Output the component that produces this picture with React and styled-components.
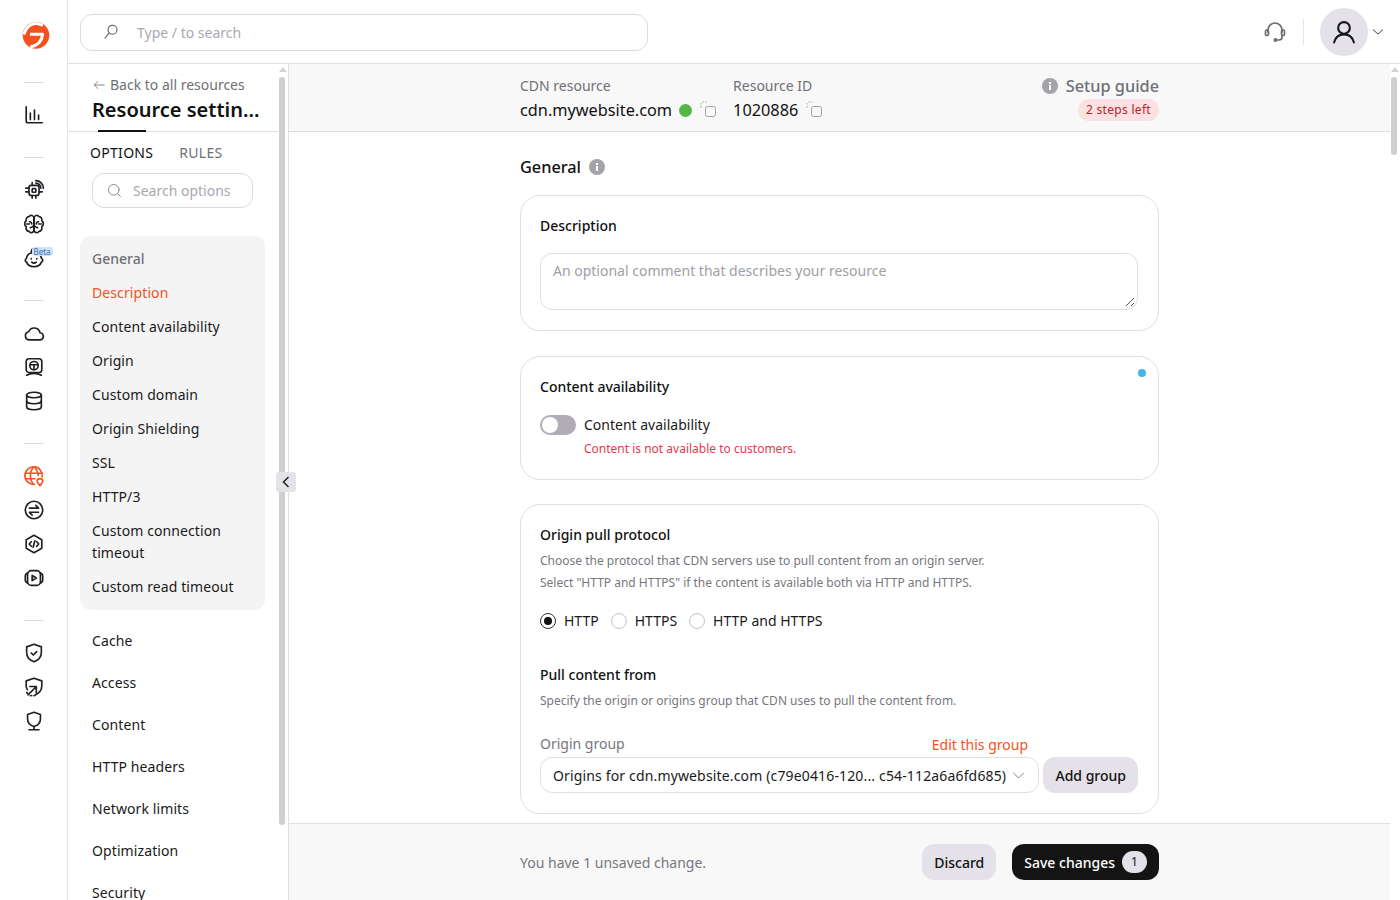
import React from 'react';
import styled, { createGlobalStyle } from 'styled-components';

const GlobalStyle = createGlobalStyle`
    html, body, #root {
        margin: 0;
        height: 100%;
    }
    body {
        font-family: "Noto Sans", "Open Sans", sans-serif;
        color: #1a1a1a;
        background: #fff;
        overflow: hidden;
    }
    * {
        box-sizing: border-box;
    }
`;

const Line = ({ size = 22, color = 'currentColor', width = 1.6, children }) => (
    <svg width={size} height={size} viewBox="0 0 24 24" fill="none" stroke={color} strokeWidth={width} strokeLinecap="round" strokeLinejoin="round">
        {children}
    </svg>
);

const Logo = () => (
    <svg width="30" height="30" viewBox="20 12 90 90" fill="none">
        <circle cx="65" cy="58" r="40" fill="#f4511e" />
        <path d="M82 27C60 15 38 27 30 52" stroke="#fff" strokeWidth="9" strokeLinecap="round" />
        <path d="M47 55H85C83 74 71 88 48 93" stroke="#fff" strokeWidth="9" strokeLinejoin="round" />
    </svg>
);

const railGroups = [
    [
        <><path d="M3.500 3v15.500a2 2 0 0 0 2 2H21" /><path d="M8 10v7M12.500 6.500v10.500M17 12v5" /></>,
    ],
    [
        <><rect x="6.500" y="7" width="11" height="11" rx="2.500" /><rect x="10" y="10.500" width="4" height="4" rx="1" /><path d="M3 10h3.500M3 14h3.500M17.500 14h3.500M10 18v3M14 18v3M10 4v3M14 4.500c3 0 5.500 2.500 5.500 5.500M14 1.800c4.500 0 8.200 3.700 8.200 8.200" /></>,
        <><path d="M12 5.500a3 3 0 0 0-5.500-1.500A3.500 3.500 0 0 0 3.500 8.500a4 4 0 0 0 0 6.500 3.700 3.700 0 0 0 3 5 3 3 0 0 0 5.500-1z" /><path d="M12 5.500a3 3 0 0 1 5.500-1.500 3.500 3.500 0 0 1 3 4.500 4 4 0 0 1 0 6.500 3.700 3.700 0 0 1-3 5 3 3 0 0 1-5.500-1z" /><path d="M12 5.500v13.500M7 9.500c1.500 0 2.500 1 2.500 2.500M17 9.500c-1.500 0-2.500 1-2.500 2.500M4 12h3M20 12h-3M8 16c1 0 2-.5 2.500-1.500M16 16c-1 0-2-.5-2.500-1.500" /></>,
        <><path d="M11 2c-2 1-2.500 3-1 4.300C6 7 4 9.500 3.800 12.500 2 13 2 16 3.900 16.500 5 19.500 8 21.500 12 21.500s7-2 8.100-5C22 16 22 13 20.200 12.500 19.800 9 16.500 6 12 6" /><path d="M9 12.500v.5M15 12.500v.5M9.500 16.500c1.500 1.300 3.500 1.300 5 0" /></>,
    ],
    [
        <path d="M7 19.500a4.500 4.500 0 0 1-.8-8.900 6.500 6.500 0 0 1 12.400 1.100 3.900 3.900 0 0 1-.6 7.800z" />,
        <><rect x="3.500" y="3" width="17" height="15" rx="3" /><circle cx="12" cy="10.500" r="4.500" /><path d="M7.800 9.500h8.400M12 10v5" /><path d="M4 21c2.500-1.500 5-2 8-2s5.500.5 8 2" /></>,
        <><ellipse cx="12" cy="5.500" rx="8" ry="3" /><path d="M4 5.500v13c0 1.700 3.600 3 8 3s8-1.300 8-3v-13" /><path d="M4 12c0 1.700 3.600 3 8 3s8-1.300 8-3" /></>,
    ],
    [
        <><g stroke="#f4511e"><path d="M21 13A9.500 9.500 0 1 0 12.500 21" /><path d="M2.800 9h18M3 15h10M11 2.800C7 8 7 15.500 11 21M13 2.800c2.600 3.200 3.700 6.500 3.700 8.700" /><path d="M18.500 22.500c-1.500-1.700-3-3-3-4.700a3 3 0 0 1 6 0c0 1.700-1.500 3-3 4.700z" /></g></>,
        <><circle cx="12" cy="12" r="9.500" /><path d="M7 10h10l-3-3M17 14.500H7l3 3" /></>,
        <><path d="M12 2.500l8.500 4.800v9.400L12 21.500l-8.500-4.800V7.300z" /><path d="M9 9.500L6.800 12 9 14.500M15 9.500l2.200 2.500-2.200 2.500M13 8.500l-2 7" /></>,
        <><rect x="5" y="4" width="14" height="16" rx="4" /><path d="M5 6.500c-1.500.5-2.500 2-2.500 3.500v4c0 1.500 1 3 2.500 3.500M19 6.500c1.500.5 2.500 2 2.500 3.500v4c0 1.500-1 3-2.500 3.500" /><path d="M10 9.200l4.500 2.800-4.500 2.800z" /></>,
    ],
    [
        <><path d="M12 2.500l8 2.800v6.200c0 5-3.500 8.500-8 10-4.500-1.500-8-5-8-10V5.300z" /><path d="M9 12l2.200 2.200L15 10.500" /></>,
        <><path d="M4.800 15C4 14 3.500 12.800 3.500 11V5.300L12 2.500l8.500 2.800V11c0 5-3.500 8.500-8.500 10.500" /><path d="M5.500 20.500l8.500-8.500M7.500 11.500H14.500V18.500" /><path d="M4 18l1 1M8 21.500l1.500-.2" /></>,
        <><path d="M12 2.500l7 2.500v5c0 4-3 6.800-7 8-4-1.200-7-4-7-8V5z" /><path d="M12 18v3.500M6.500 21.500h11" /></>,
    ],
];

const navGeneral = ['Description', 'Content availability', 'Origin', 'Custom domain', 'Origin Shielding', 'SSL', 'HTTP/3', 'Custom connection timeout', 'Custom read timeout'];
const navOther = ['Cache', 'Access', 'Content', 'HTTP headers', 'Network limits', 'Optimization', 'Security'];

const CopyIcon = () => (
    <CopyWrap>
        <svg width="16" height="16" viewBox="0 0 16 16" fill="none" strokeWidth="1">
            <path d="M1 6.500V2.500a1.500 1.500 0 0 1 1.500-1.500H6.500" stroke="#a0a0a6" strokeDasharray="1.500 1.500" />
            <rect x="5.500" y="5.500" width="10" height="10" rx="2" stroke="#a0a0a6" />
        </svg>
    </CopyWrap>
);

const InfoIcon = ({ size = 16 }) => (
    <svg width={size} height={size} viewBox="0 0 16 16">
        <circle cx="8" cy="8" r="8" fill="#a3a3a8" />
        <rect x="7" y="7" width="2" height="5" fill="#fff" />
        <rect x="7" y="4" width="2" height="2" fill="#fff" />
    </svg>
);

const App = () => {
    return (
        <Page>
            <GlobalStyle />
            <Rail>
                <LogoSlot><Logo /></LogoSlot>
                {railGroups.map((group, i) => (
                    <RailGroup key={i}>
                        <RailDivider />
                        {group.map((icon, j) => (
                            <RailIcon key={j}>
                                <Line size={22} width={1.8}>{icon}</Line>
                                {i === 1 && j === 2 && <BetaTag>Beta</BetaTag>}
                            </RailIcon>
                        ))}
                    </RailGroup>
                ))}
            </Rail>

            <Workspace>
                <TopBar>
                    <GlobalSearch>
                        <Line size={18} color="#55555c" width={1.4}>
                            <circle cx="14" cy="9" r="6" />
                            <path d="M9.500 13.500L4 20" />
                        </Line>
                        <span>Type / to search</span>
                    </GlobalSearch>
                    <TopActions>
                        <Line size={24} color="#6c6c73" width={1.7}>
                            <path d="M5 12V10a7 7 0 0 1 14 0v2M19 15v2a3 3 0 0 1-3 3h-2" />
                            <rect x="2.500" y="10" width="3" height="5.500" rx="1.200" />
                            <rect x="18.500" y="10" width="3" height="5.500" rx="1.200" />
                            <circle cx="12.500" cy="20" r="1.200" />
                        </Line>
                        <TopSeparator />
                        <Avatar>
                            <Line size={28} color="#16161a" width={1.8}>
                                <circle cx="12" cy="8.500" r="5" />
                                <path d="M3.500 21c1-4 4-7 8.500-7s7.500 3 8.500 7" />
                            </Line>
                        </Avatar>
                        <Line size={16} color="#33333a" width={1.4}><path d="M5 9l7 6 7-6" /></Line>
                    </TopActions>
                </TopBar>

                <Body>
                    <Sidebar>
                        <SidebarColumn>
                            <SidebarHead>
                                <BackLink>
                                    <Line size={14} color="#77777e" width={1.5}><path d="M21 12H4M10 6l-6 6 6 6" /></Line>
                                    Back to all resources
                                </BackLink>
                                <SidebarTitle>Resource settin...</SidebarTitle>
                            </SidebarHead>
                            <Tabs>
                                <Tab $active>OPTIONS</Tab>
                                <Tab>RULES</Tab>
                            </Tabs>
                            <OptionSearch>
                                <Line size={17} color="#8b8b92" width={1.4}>
                                    <circle cx="11" cy="11" r="7.500" />
                                    <path d="M17 17l3.500 3.500" />
                                </Line>
                                <span>Search options</span>
                            </OptionSearch>
                            <NavPanel>
                                <NavHeading>General</NavHeading>
                                {navGeneral.map((item) => (
                                    <NavItem key={item} $active={item === 'Description'}>{item}</NavItem>
                                ))}
                            </NavPanel>
                            <NavRest>
                                {navOther.map((item) => <NavRestItem key={item}>{item}</NavRestItem>)}
                            </NavRest>
                        </SidebarColumn>
                        <Scrollbar $thumbTop={13} $thumbHeight={748} />
                    </Sidebar>

                    <CollapseButton>
                        <svg width="10" height="14" viewBox="0 0 10 14" fill="none" stroke="#222" strokeWidth="1.500"><path d="M7.500 2L2.500 7l5 5" /></svg>
                    </CollapseButton>

                    <Main>
                        <MainColumn>
                            <ResourceBar>
                                <ResourceInner>
                                    <ResourceField>
                                        <FieldLabel>CDN resource</FieldLabel>
                                        <FieldValue>cdn.mywebsite.com<StatusDot /><CopyIcon /></FieldValue>
                                    </ResourceField>
                                    <ResourceField>
                                        <FieldLabel>Resource ID</FieldLabel>
                                        <FieldValue>1020886<CopyIcon /></FieldValue>
                                    </ResourceField>
                                    <Guide>
                                        <GuideTitle><InfoIcon />Setup guide</GuideTitle>
                                        <StepsBadge>2 steps left</StepsBadge>
                                    </Guide>
                                </ResourceInner>
                            </ResourceBar>

                            <Content>
                                <ContentInner>
                                    <SectionTitle>General <InfoIcon /></SectionTitle>

                                    <Card>
                                        <CardTitle>Description</CardTitle>
                                        <TextArea>
                                            An optional comment that describes your resource
                                            <ResizeHandle width="10" height="10" viewBox="0 0 10 10" stroke="#55555c" strokeWidth="1">
                                                <path d="M1 9l8-8M6 9l3-3" />
                                            </ResizeHandle>
                                        </TextArea>
                                    </Card>

                                    <Card>
                                        <ChangedDot />
                                        <CardTitle>Content availability</CardTitle>
                                        <ToggleRow>
                                            <Toggle />
                                            <span>Content availability</span>
                                        </ToggleRow>
                                        <ErrorText>Content is not available to customers.</ErrorText>
                                    </Card>

                                    <Card>
                                        <CardTitle>Origin pull protocol</CardTitle>
                                        <Help>Choose the protocol that CDN servers use to pull content from an origin server.</Help>
                                        <Help>Select "HTTP and HTTPS" if the content is available both via HTTP and HTTPS.</Help>
                                        <RadioRow>
                                            <RadioOption><Radio $checked />HTTP</RadioOption>
                                            <RadioOption><Radio />HTTPS</RadioOption>
                                            <RadioOption><Radio />HTTP and HTTPS</RadioOption>
                                        </RadioRow>
                                        <SubTitle>Pull content from</SubTitle>
                                        <Help>Specify the origin or origins group that CDN uses to pull the content from.</Help>
                                        <LabelRow>
                                            <OriginLabel>Origin group</OriginLabel>
                                            <EditLink>Edit this group</EditLink>
                                        </LabelRow>
                                        <SelectRow>
                                            <Select>
                                                <span>Origins for cdn.mywebsite.com (c79e0416-120... c54-112a6a6fd685)</span>
                                                <Line size={15} color="#66666d" width={1.3}><path d="M4 8l8 8 8-8" /></Line>
                                            </Select>
                                            <GreyButton>Add group</GreyButton>
                                        </SelectRow>
                                    </Card>
                                </ContentInner>
                            </Content>

                            <Footer>
                                <FooterInner>
                                    <span>You have 1 unsaved change.</span>
                                    <FooterActions>
                                        <GreyButton>Discard</GreyButton>
                                        <SaveButton>Save changes<Count>1</Count></SaveButton>
                                    </FooterActions>
                                </FooterInner>
                            </Footer>
                        </MainColumn>
                        <Scrollbar $thumbTop={13} $thumbHeight={78} />
                    </Main>
                </Body>
            </Workspace>
        </Page>
    );
};

const Page = styled.div`
    display: flex;
    height: 100vh;
    overflow: hidden;
`;

const Rail = styled.nav`
    flex: 0 0 68px;
    border-right: 1px solid #e4e4e6;
    display: flex;
    flex-direction: column;
    align-items: center;
    color: #1f1f24;
`;

const LogoSlot = styled.div`
    height: 57px;
    padding-top: 20px;
    display: flex;
    justify-content: center;
    margin-left: 5px;
`;

const RailGroup = styled.div`
    display: flex;
    flex-direction: column;
    align-items: center;
    width: 100%;
`;

const RailDivider = styled.div`
    width: 20px;
    height: 1px;
    background: #dcdcde;
    margin: 25px 0 15px;
`;

const RailIcon = styled.div`
    position: relative;
    width: 34px;
    height: 34px;
    display: flex;
    align-items: center;
    justify-content: center;
`;

const BetaTag = styled.span`
    position: absolute;
    top: 6px;
    left: 15px;
    padding: 0 2px;
    font-size: 8px;
    line-height: 9px;
    color: #3a6ea8;
    background: #cfe2f7;
    border-radius: 3px;
`;

const Workspace = styled.div`
    flex: 1;
    min-width: 0;
    display: flex;
    flex-direction: column;
`;

const TopBar = styled.header`
    flex: 0 0 64px;
    display: flex;
    align-items: center;
    justify-content: space-between;
    padding: 1px 14px 0 12px;
    border-bottom: 1px solid #dfdfe1;
`;

const GlobalSearch = styled.div`
    width: 568px;
    height: 37px;
    border: 1px solid #dcdcde;
    border-radius: 12px;
    display: flex;
    align-items: center;
    gap: 17px;
    padding-left: 21px;
    font-size: 14px;
    color: #a9a9af;
`;

const TopActions = styled.div`
    display: flex;
    align-items: center;
`;

const TopSeparator = styled.div`
    width: 1px;
    height: 26px;
    background: #e4e4e6;
    margin: 0 16px;
`;

const Avatar = styled.div`
    width: 48px;
    height: 48px;
    border-radius: 50%;
    background: #e4e2e8;
    display: flex;
    align-items: center;
    justify-content: center;
    margin-right: 2px;
`;

const Body = styled.div`
    position: relative;
    flex: 1;
    min-height: 0;
    display: flex;
`;

const Sidebar = styled.aside`
    flex: 0 0 221px;
    display: flex;
    border-right: 1px solid #dfdfe1;
    overflow: hidden;
`;

const SidebarColumn = styled.div`
    flex: 1;
    min-width: 0;
`;

const SidebarHead = styled.div`
    height: 68px;
    padding: 12px 0 0 24px;
    border-bottom: 1px solid #dfdfe1;
    position: relative;

    &::after {
        content: '';
        position: absolute;
        left: 30px;
        bottom: -1px;
        width: 48px;
        height: 2px;
        background: #111;
    }
`;

const BackLink = styled.div`
    display: flex;
    align-items: center;
    gap: 4px;
    font-size: 14px;
    line-height: 18px;
    color: #6f6f76;
`;

const SidebarTitle = styled.div`
    font-size: 20px;
    font-weight: 600;
    line-height: 28px;
    margin-top: 2px;
    color: #111;
`;

const Tabs = styled.div`
    display: flex;
    gap: 26px;
    padding: 11px 0 0 22px;
`;

const Tab = styled.span`
    font-size: 14px;
    line-height: 20px;
    letter-spacing: 0.3px;
    color: ${({ $active }) => ($active ? '#111' : '#6f6f76')};
`;

const OptionSearch = styled.div`
    width: 161px;
    height: 35px;
    margin: 10px 0 0 24px;
    border: 1px solid #dcdcde;
    border-radius: 12px;
    display: flex;
    align-items: center;
    gap: 10px;
    padding-left: 13px;
    font-size: 14px;
    color: #a9a9af;
`;

const NavPanel = styled.div`
    width: 185px;
    margin: 28px 0 0 12px;
    padding: 6px 12px;
    background: #f4f4f4;
    border-radius: 10px;
`;

const NavHeading = styled.div`
    font-size: 14px;
    line-height: 22px;
    padding: 6px 0;
    font-weight: 500;
    color: #6f6f76;
`;

const NavItem = styled.div`
    font-size: 14px;
    line-height: 22px;
    letter-spacing: 0.1px;
    padding: 6px 0;
    color: ${({ $active }) => ($active ? '#f4511e' : '#1a1a1a')};
`;

const NavRest = styled.div`
    padding: 10px 0 0 24px;
`;

const NavRestItem = styled.div`
    font-size: 14px;
    line-height: 22px;
    letter-spacing: 0.1px;
    padding: 10px 0;
    white-space: nowrap;
`;

const Scrollbar = styled.div`
    position: relative;
    flex: 0 0 10px;
    background: #fff;

    &::before {
        content: '';
        position: absolute;
        top: 3px;
        left: 1px;
        border: 4px solid transparent;
        border-top: 0;
        border-bottom: 5px solid #d4d4d8;
    }
    &::after {
        content: '';
        position: absolute;
        top: ${({ $thumbTop }) => $thumbTop}px;
        left: 1px;
        width: 6px;
        height: ${({ $thumbHeight }) => $thumbHeight}px;
        background: #cfcfd3;
        border-radius: 3px;
    }
`;

const CollapseButton = styled.div`
    position: absolute;
    left: 208px;
    top: 408px;
    width: 20px;
    height: 20px;
    background: #e4e2e8;
    border-radius: 3px;
    display: flex;
    align-items: center;
    justify-content: center;
`;

const Main = styled.main`
    flex: 1;
    min-width: 0;
    display: flex;
`;

const MainColumn = styled.div`
    flex: 1;
    min-width: 0;
    display: flex;
    flex-direction: column;
`;

const ResourceBar = styled.div`
    flex: 0 0 68px;
    background: #f8f8f8;
    border-bottom: 1px solid #dfdfe1;
`;

const ResourceInner = styled.div`
    width: 639px;
    margin: 0 auto;
    display: flex;
    gap: 17px;
    padding-top: 12px;
`;

const ResourceField = styled.div`
    display: flex;
    flex-direction: column;
`;

const FieldLabel = styled.div`
    font-size: 14px;
    line-height: 20px;
    color: #6f6f76;
`;

const FieldValue = styled.div`
    display: flex;
    align-items: center;
    font-size: 16.3px;
    line-height: 24px;
    margin-top: 2px;
    color: #111;
`;

const StatusDot = styled.span`
    width: 13px;
    height: 13px;
    border-radius: 50%;
    background: #53b848;
    margin-left: 7px;
`;

const CopyWrap = styled.span`
    display: inline-flex;
    margin: -3px 0 0 8px;
`;

const Guide = styled.div`
    margin-left: auto;
    display: flex;
    flex-direction: column;
    align-items: flex-end;
`;

const GuideTitle = styled.div`
    display: flex;
    align-items: center;
    gap: 8px;
    font-size: 16.3px;
    font-weight: 500;
    line-height: 20px;
    color: #6f6f76;
`;

const StepsBadge = styled.div`
    margin-top: 3px;
    height: 22px;
    padding: 0 8px;
    border-radius: 11px;
    background: #fbe1e1;
    color: #b3262e;
    font-size: 12px;
    letter-spacing: 0.3px;
    line-height: 22px;
`;

const Content = styled.div`
    flex: 1;
    min-height: 0;
    overflow: hidden;
`;

const ContentInner = styled.div`
    width: 639px;
    margin: 0 auto;
    padding-top: 23px;
    display: flex;
    flex-direction: column;
    gap: 24.5px;
`;

const SectionTitle = styled.h2`
    display: flex;
    align-items: center;
    gap: 8px;
    margin: 0 0 -8.500px;
    font-size: 16.3px;
    font-weight: 500;
    line-height: 24px;
    color: #111;
`;

const Card = styled.section`
    position: relative;
    flex: none;
    border: 1px solid #dfdfe1;
    border-radius: 20px;
    padding: 19px 20px 20px 19px;
`;

const CardTitle = styled.h3`
    margin: 0;
    font-size: 14px;
    font-weight: 500;
    line-height: 22px;
    color: #111;
`;

const SubTitle = styled(CardTitle)`
    margin-top: 32px;
`;

const TextArea = styled.div`
    position: relative;
    height: 57px;
    margin-top: 16px;
    padding: 6px 12px;
    border: 1px solid #dfdfe1;
    border-radius: 12px;
    font-size: 14px;
    line-height: 22px;
    color: #a0a0a6;
`;

const ResizeHandle = styled.svg`
    position: absolute;
    right: 2px;
    bottom: 2px;
`;

const ChangedDot = styled.span`
    position: absolute;
    top: 12px;
    right: 12px;
    width: 8px;
    height: 8px;
    border-radius: 50%;
    background: #42b4ec;
`;

const ToggleRow = styled.div`
    display: flex;
    align-items: center;
    gap: 8px;
    margin-top: 16px;
    font-size: 14px;
    line-height: 22px;
`;

const Toggle = styled.span`
    position: relative;
    width: 36px;
    height: 20px;
    border-radius: 10px;
    background: #b0adb6;

    &::after {
        content: '';
        position: absolute;
        top: 2px;
        left: 2px;
        width: 16px;
        height: 16px;
        border-radius: 50%;
        background: #fff;
    }
`;

const ErrorText = styled.div`
    margin: 3px 0 0 44px;
    font-size: 12px;
    line-height: 20px;
    color: #e8384f;
`;

const Help = styled.div`
    font-size: 12px;
    line-height: 22px;
    color: #77777e;
    ${CardTitle} + & {
        margin-top: 4px;
    }
`;

const RadioRow = styled.div`
    display: flex;
    gap: 12px;
    margin-top: 16px;
`;

const RadioOption = styled.label`
    display: flex;
    align-items: center;
    gap: 8px;
    font-size: 14px;
    line-height: 22px;
`;

const Radio = styled.span`
    width: 16px;
    height: 16px;
    border-radius: 50%;
    border: 1px solid ${({ $checked }) => ($checked ? '#33333a' : '#c4c4c8')};
    display: flex;
    align-items: center;
    justify-content: center;

    &::after {
        content: '';
        width: 8px;
        height: 8px;
        border-radius: 50%;
        background: ${({ $checked }) => ($checked ? '#111' : 'transparent')};
    }
`;

const LabelRow = styled.div`
    position: relative;
    margin-top: 19px;
    height: 24px;
    display: flex;
    align-items: center;
    font-size: 14px;
`;

const OriginLabel = styled.span`
    color: #77777e;
`;

const EditLink = styled.span`
    margin-left: auto;
    margin-right: 110px;
    padding-top: 2px;
    color: #f4511e;
`;

const SelectRow = styled.div`
    display: flex;
    gap: 4px;
    margin-top: 2px;
`;

const Select = styled.div`
    width: 500px;
    height: 36px;
    border: 1px solid #dfdfe1;
    border-radius: 12px;
    padding: 0 12px;
    display: flex;
    align-items: center;
    justify-content: space-between;
    font-size: 14px;
    letter-spacing: 0.15px;
    white-space: nowrap;
`;

const GreyButton = styled.button`
    height: 36px;
    padding: 0 12px;
    border: 0;
    border-radius: 12px;
    background: #e4e2e8;
    color: #111;
    font: 500 14px "Noto Sans", sans-serif;
    white-space: nowrap;
`;

const Footer = styled.div`
    flex: 0 0 77px;
    background: #f8f8f8;
    border-top: 1px solid #dfdfe1;
`;

const FooterInner = styled.div`
    width: 639px;
    height: 100%;
    margin: 0 auto;
    display: flex;
    align-items: center;
    justify-content: space-between;
    font-size: 14px;
    color: #77777e;
`;

const FooterActions = styled.div`
    display: flex;
    gap: 16px;
`;

const SaveButton = styled(GreyButton)`
    display: flex;
    align-items: center;
    gap: 7px;
    background: #141414;
    color: #fff;
`;

const Count = styled.span`
    width: 25px;
    height: 22px;
    border-radius: 11px;
    background: #e4e2e8;
    color: #111;
    font-size: 12px;
    font-weight: 400;
    line-height: 22px;
    text-align: center;
`;

export default App;
